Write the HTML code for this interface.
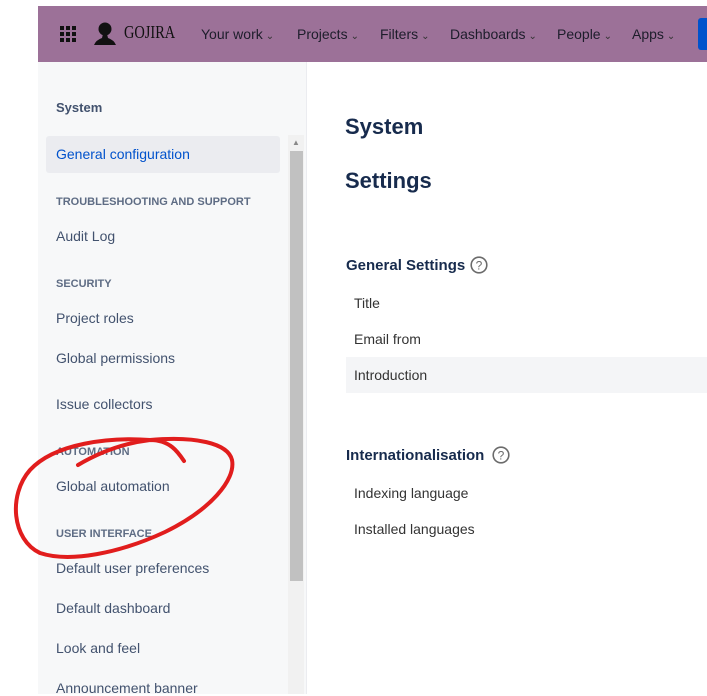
<!DOCTYPE html>
<html><head><style>
body{margin:0;width:707px;height:694px;overflow:hidden;background:#fff;font-family:"Liberation Sans",sans-serif;position:relative}
.a{position:absolute;white-space:nowrap}
.nav{position:absolute;left:38px;top:6px;width:669px;height:56px;background:#9c7198}
.ni{position:absolute;top:26px;font-size:14px;color:#1d1d2b}
.ni small{font-size:10px;color:#333;margin-left:3px}
.side{position:absolute;left:38px;top:62px;width:268px;height:632px;background:#f7f8f9;border-right:1px solid #ebecf0}
.it{position:absolute;left:56px;font-size:14px;color:#42526e}
.hd{position:absolute;left:56px;font-size:11px;font-weight:bold;color:#5e6c84}
.r{position:absolute;left:354px;font-size:14px;color:#333}
</style></head><body>
<div class="nav"></div>
<svg class="a" style="left:60px;top:26px" width="16" height="16"><g fill="#111"><rect x="0" y="0" width="4" height="4"/><rect x="6" y="0" width="4" height="4"/><rect x="12" y="0" width="4" height="4"/><rect x="0" y="6" width="4" height="4"/><rect x="6" y="6" width="4" height="4"/><rect x="12" y="6" width="4" height="4"/><rect x="0" y="12" width="4" height="4"/><rect x="6" y="12" width="4" height="4"/><rect x="12" y="12" width="4" height="4"/></g></svg>
<svg class="a" style="left:93px;top:21px" width="24" height="26"><circle cx="12" cy="8" r="6.5" fill="#111"/><path d="M10 13 L9 17 Q3 19 1 24 L23 24 Q21 19 15 17 L14 13Z" fill="#111"/></svg>
<div class="a" style="left:124px;top:22px;font-size:18px;font-family:'Liberation Serif',serif;color:#111;transform:scaleX(0.8);transform-origin:left">GOJIRA</div>
<div class="ni" style="left:201px">Your work<small>⌄</small></div>
<div class="ni" style="left:297px">Projects<small>⌄</small></div>
<div class="ni" style="left:380px">Filters<small>⌄</small></div>
<div class="ni" style="left:450px">Dashboards<small>⌄</small></div>
<div class="ni" style="left:557px">People<small>⌄</small></div>
<div class="ni" style="left:632px">Apps<small>⌄</small></div>
<div class="a" style="left:698px;top:18px;width:12px;height:32px;background:#0052cc;border-radius:3px"></div>
<div class="side"></div>
<div class="a" style="left:56px;top:100px;font-size:13px;font-weight:bold;color:#42526e">System</div>
<div class="a" style="left:46px;top:136px;width:234px;height:37px;background:#ebecf0;border-radius:3px"></div>
<div class="it" style="top:146px;color:#0052cc">General configuration</div>
<div class="hd" style="top:196px">TROUBLESHOOTING AND SUPPORT</div>
<div class="it" style="top:228px">Audit Log</div>
<div class="hd" style="top:278px">SECURITY</div>
<div class="it" style="top:310px">Project roles</div>
<div class="it" style="top:350px">Global permissions</div>
<div class="it" style="top:396px">Issue collectors</div>
<div class="hd" style="top:446px">AUTOMATION</div>
<div class="it" style="top:478px">Global automation</div>
<div class="hd" style="top:528px">USER INTERFACE</div>
<div class="it" style="top:560px">Default user preferences</div>
<div class="it" style="top:600px">Default dashboard</div>
<div class="it" style="top:640px">Look and feel</div>
<div class="it" style="top:680px">Announcement banner</div>
<div class="a" style="left:288px;top:135px;width:16px;height:559px;background:#f1f1f1"></div>
<div class="a" style="left:292px;top:138px;font-size:8px;color:#888">▲</div>
<div class="a" style="left:290px;top:151px;width:13px;height:430px;background:#c1c1c1"></div>
<div class="a" style="left:345px;top:114px;font-size:22px;font-weight:bold;color:#172b4d">System</div>
<div class="a" style="left:345px;top:168px;font-size:22px;font-weight:bold;color:#172b4d">Settings</div>
<div class="a" style="left:346px;top:257px;font-size:15px;font-weight:bold;color:#172b4d">General Settings</div>
<svg class="a" style="left:470px;top:256px" width="18" height="18"><circle cx="9" cy="9" r="7.8" fill="none" stroke="#6b6b6b" stroke-width="1.6"/><text x="9" y="13.5" text-anchor="middle" font-size="12" font-family="Liberation Sans" fill="#6b6b6b">?</text></svg>
<div class="r" style="top:295px">Title</div>
<div class="r" style="top:331px">Email from</div>
<div class="a" style="left:346px;top:357px;width:361px;height:36px;background:#f4f5f7"></div>
<div class="r" style="top:367px">Introduction</div>
<div class="a" style="left:346px;top:447px;font-size:15px;font-weight:bold;color:#172b4d">Internationalisation</div>
<svg class="a" style="left:492px;top:446px" width="18" height="18"><circle cx="9" cy="9" r="7.8" fill="none" stroke="#6b6b6b" stroke-width="1.6"/><text x="9" y="13.5" text-anchor="middle" font-size="12" font-family="Liberation Sans" fill="#6b6b6b">?</text></svg>
<div class="r" style="top:485px">Indexing language</div>
<div class="r" style="top:521px">Installed languages</div>
<svg class="a" style="left:0;top:0" width="707" height="694"><path d="M78 465 C100 452 125 443 150 440 C170 440 178 452 184 461 M150 440 C110 437 55 443 30 470 C8 495 12 540 40 553 C70 563 120 553 165 532 C210 510 236 480 232 460 C228 443 195 436 150 440" fill="none" stroke="#e11d1d" stroke-width="4" stroke-linecap="round"/></svg>
</body></html>
